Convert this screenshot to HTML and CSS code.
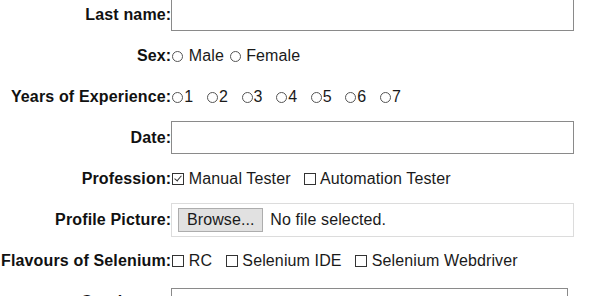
FILE: index.html
```html
<!DOCTYPE html>
<html lang="en">
<head>
    <meta charset="UTF-8">
    <title>Practice Form</title>
    <link rel="stylesheet" href="styles.css">
</head>
<body>
    <form class="practice-form">
        <table class="form-table">
            <tr>
                <td class="field-label">Last name:</td>
                <td><input type="text" class="text-field" name="lastname"></td>
            </tr>
            <tr>
                <td class="field-label">Sex:</td>
                <td>
                    <label class="option"><input type="radio" name="sex"> Male</label>
                    <label class="option"><input type="radio" name="sex"> Female</label>
                </td>
            </tr>
            <tr>
                <td class="field-label">Years of Experience:</td>
                <td class="years">
                    <label class="option"><input type="radio" name="exp">1</label>
                    <label class="option"><input type="radio" name="exp">2</label>
                    <label class="option"><input type="radio" name="exp">3</label>
                    <label class="option"><input type="radio" name="exp">4</label>
                    <label class="option"><input type="radio" name="exp">5</label>
                    <label class="option"><input type="radio" name="exp">6</label>
                    <label class="option"><input type="radio" name="exp">7</label>
                </td>
            </tr>
            <tr>
                <td class="field-label">Date:</td>
                <td><input type="text" class="text-field" name="date"></td>
            </tr>
            <tr>
                <td class="field-label">Profession:</td>
                <td class="checks">
                    <label class="option"><input type="checkbox" checked> Manual Tester</label>
                    <label class="option"><input type="checkbox"> Automation Tester</label>
                </td>
            </tr>
            <tr>
                <td class="field-label">Profile Picture:</td>
                <td>
                    <div class="file-field">
                        <button type="button" class="browse">Browse...</button>
                        <span>No file selected.</span>
                    </div>
                </td>
            </tr>
            <tr>
                <td class="field-label">Flavours of Selenium:</td>
                <td class="checks">
                    <label class="option"><input type="checkbox"> RC</label>
                    <label class="option"><input type="checkbox"> Selenium IDE</label>
                    <label class="option"><input type="checkbox"> Selenium Webdriver</label>
                </td>
            </tr>
            <tr>
                <td class="field-label">Continents:</td>
                <td>
                    <select class="select-field">
                        <option>Asia</option>
                        <option>Europe</option>
                        <option>Africa</option>
                    </select>
                </td>
            </tr>
        </table>
    </form>
</body>
</html>
```

FILE: styles.css
```css
body {
    margin: 0;
    font-family: "Liberation Sans", Arial, sans-serif;
    font-size: 16px;
    letter-spacing: 0.12px;
    color: #1a1a1a;
    background: #fff;
}

.practice-form {
    margin-top: -6px;
    padding-left: 1px;
}

.form-table {
    border-collapse: collapse;
}

.form-table td {
    height: 41px;
    padding: 0;
    vertical-align: middle;
    white-space: nowrap;
}

.field-label {
    text-align: right;
    font-weight: bold;
    letter-spacing: 0.15px;
    color: #111;
}

.text-field {
    box-sizing: border-box;
    width: 403px;
    height: 33px;
    margin: 0;
    border: 1px solid #8a8a8a;
    display: block;
}

.option {
    display: inline;
}

.years .option {
    margin-right: 8px;
}

.checks .option {
    margin-right: 8px;
}

input[type="radio"] {
    appearance: none;
    width: 11px;
    height: 11px;
    margin: 0 1px 0 1px;
    vertical-align: -1px;
    border: 1px solid #555;
    border-radius: 50%;
    background: #fff;
}

input[type="checkbox"] {
    appearance: none;
    box-sizing: border-box;
    width: 12px;
    height: 12px;
    margin: 0 0 0 1px;
    vertical-align: -1px;
    border: 1px solid #333;
    background: #fff;
    position: relative;
}

input[type="checkbox"]:checked::after {
    content: "";
    position: absolute;
    left: 3px;
    top: 0;
    width: 3px;
    height: 6px;
    border: solid #333;
    border-width: 0 1px 1px 0;
    transform: rotate(40deg);
}

.file-field {
    box-sizing: border-box;
    width: 403px;
    height: 34px;
    border: 1px solid #dcdcdc;
    display: flex;
    align-items: center;
    gap: 7px;
    padding-left: 6px;
}

.browse {
    font-family: inherit;
    font-size: 16px;
    letter-spacing: inherit;
    color: #1a1a1a;
    height: 24px;
    width: 85px;
    padding: 0;
    background: #e1e1e1;
    border: 1px solid #adadad;
}

.select-field {
    box-sizing: border-box;
    width: 397px;
    height: 33px;
    margin-top: 6px;
    font-family: inherit;
    font-size: 16px;
    border: 1px solid #8a8a8a;
    background: #fff;
}
```
